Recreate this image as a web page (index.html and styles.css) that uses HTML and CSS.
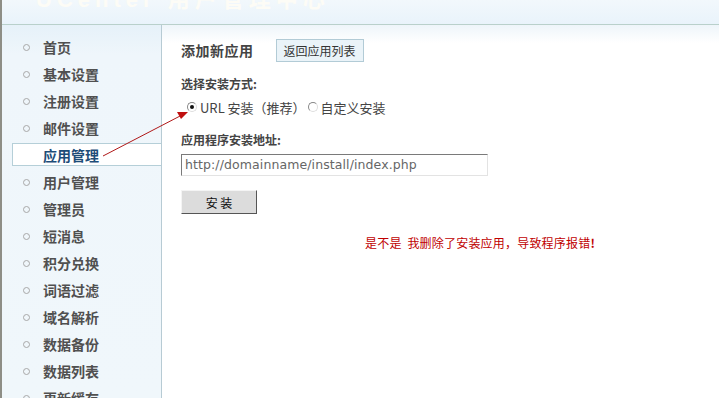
FILE: index.html
```html
<!DOCTYPE html>
<html>
<head>
<meta charset="utf-8">
<link rel="stylesheet" href="styles.css">
</head>
<body>
<div class="frame">
  <div class="header"><div class="logo">UCenter 用户管理中心</div></div>
  <div class="main">
    <ul class="side">
      <li><span class="dot"></span>首页</li>
      <li><span class="dot"></span>基本设置</li>
      <li><span class="dot"></span>注册设置</li>
      <li><span class="dot"></span>邮件设置</li>
      <li class="active">应用管理</li>
      <li><span class="dot"></span>用户管理</li>
      <li><span class="dot"></span>管理员</li>
      <li><span class="dot"></span>短消息</li>
      <li><span class="dot"></span>积分兑换</li>
      <li><span class="dot"></span>词语过滤</li>
      <li><span class="dot"></span>域名解析</li>
      <li><span class="dot"></span>数据备份</li>
      <li><span class="dot"></span>数据列表</li>
      <li><span class="dot"></span>更新缓存</li>
    </ul>
    <div class="content">
      <div class="titlerow"><h3>添加新应用</h3><span class="backbtn">返回应用列表</span></div>
      <div class="label l1">选择安装方式:</div>
      <div class="radios">
        <span class="radio on"></span><span>URL 安装（推荐）</span>
        <span class="radio"></span><span>自定义安装</span>
      </div>
      <div class="label l2">应用程序安装地址:</div>
      <div class="input">http://domainname/install/index.php</div>
      <div class="btn">安 装</div>
      <div class="note">是不是 &nbsp;我删除了安装应用，导致程序报错<b>!</b></div>
    </div>
  </div>
  <svg class="arrow" width="719" height="398" viewBox="0 0 719 398">
    <line x1="103" y1="156" x2="182" y2="115" stroke="#b01818" stroke-width="1"/>
    <polygon points="188,112 177,112 181,119" fill="#c01010"/>
  </svg>
</div>
</body>
</html>
```
FILE: styles.css
```css
* { box-sizing: border-box; }
html, body { margin: 0; padding: 0; }
body {
  width: 719px; height: 398px; overflow: hidden;
  font-family: "Liberation Sans", "Noto Sans CJK SC", sans-serif;
  background: #fff;
}
.frame {
  position: relative; width: 719px; height: 398px; overflow: hidden;
  border-left: 2px solid #8e8e86;
}
.header {
  height: 25px;
  background: linear-gradient(#f2f8fc, #e9f3fb);
  border-bottom: 1px solid #b9d0cb;
  overflow: hidden;
}
.logo {
  margin-top: -19px; margin-left: 34px;
  font: bold 22px "Liberation Sans", "Noto Sans CJK SC", sans-serif;
  color: #fdfcf6; letter-spacing: 5px;
}
.main { display: flex; height: 373px; }
.side {
  list-style: none; margin: 0; padding: 8px 0 0 10px;
  width: 160px; flex: none;
  background: linear-gradient(#e6f1f9, #eff6fb 30px, #f0f7fb);
  border-right: 1px solid #b7cbd4;
}
.side li {
  height: 27px; display: flex; align-items: center;
  font: bold 14px "Noto Sans CJK SC", sans-serif;
  color: #505050; padding-left: 31px; position: relative;
}
.dot {
  position: absolute; left: 11px; top: 11px;
  width: 7px; height: 7px; border: 1px solid #a8a8a8; border-radius: 50%;
}
.side li.active {
  background: #fff; border: 1px solid #b5cfd8; border-right: none;
  color: #1d4c78; height: 23px; margin: 2px 0; padding-left: 30px;
}
.content {
  flex: 1; padding: 13px 0 0 19px;
  background: linear-gradient(#eef5fa, #fff 18px);
  font-size: 12px; color: #333;
}
.titlerow { display: flex; align-items: center; height: 24px; }
.titlerow h3 {
  margin: 0; font: bold 14px "Noto Sans CJK SC", sans-serif; color: #444;
  letter-spacing: 0.5px;
}
.backbtn {
  margin-left: 22px; height: 23px; padding: 0 7px;
  display: flex; align-items: center;
  background: #eaf3f8; border: 1px solid #b2cbd6;
  font: 12px "Noto Sans CJK SC", sans-serif; color: #333;
}
.label { font: bold 12px "Noto Sans CJK SC", sans-serif; color: #444; }
.l1 { margin-top: 13px; }
.radios {
  display: flex; align-items: center; margin-top: 6px; height: 18px;
  padding-left: 6px; font: 13px "Noto Sans CJK SC", sans-serif; color: #444;
}
.radio {
  width: 10px; height: 10px; border-radius: 50%; margin-right: 3px;
  border: 1px solid #888; border-right-color: #ddd; border-bottom-color: #ddd;
  background: #fff; position: relative;
}
.radio.on::after {
  content: ""; position: absolute; left: 2px; top: 2px;
  width: 4px; height: 4px; border-radius: 50%; background: #111;
}
.radios span + .radio { margin-left: 2px; }
.l2 { margin-top: 15px; }
.input {
  margin-top: 6px; width: 307px; height: 22px;
  border: 1px solid #e3e3e3; border-top-color: #7a7a7a; border-left-color: #7a7a7a;
  padding: 2px 3px; font: 13px "DejaVu Sans", sans-serif; color: #666;
  font-size: 12.5px; letter-spacing: 0.1px;
}
.btn {
  margin-top: 14px; width: 76px; height: 24px;
  background: #dcdcdc; border: 1px solid #f4f4f4;
  border-right-color: #555; border-bottom-color: #555;
  display: flex; align-items: center; justify-content: center;
  font: 12px "Noto Sans CJK SC", sans-serif; color: #111;
}
.note {
  margin: 20px 0 0 184px; letter-spacing: 0.2px;
  font: 12px "Noto Sans CJK SC", sans-serif; color: #c00000;
}
.note b { font-weight: bold; }
.arrow { position: absolute; left: -2px; top: 0; pointer-events: none; }
```
